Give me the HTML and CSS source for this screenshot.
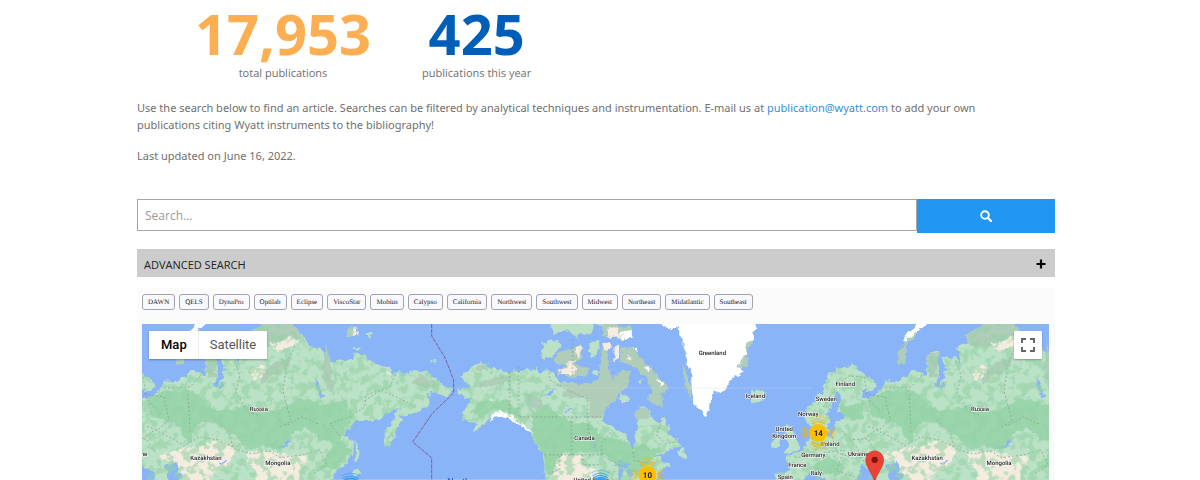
FILE: index.html
```html
<!DOCTYPE html>
<html lang="en">
<head>
<meta charset="utf-8">
<title>Bibliography</title>
<link rel="stylesheet" href="styles.css">
</head>
<body>
<main class="page">
  <section class="stats">
    <div class="stat stat-total"><strong>17,953</strong><span>total publications</span></div>
    <div class="stat stat-year"><strong>425</strong><span>publications this year</span></div>
  </section>
  <p class="intro">Use the search below to find an article. Searches can be filtered by analytical techniques and instrumentation. E-mail us at <a href="mailto:publication@wyatt.com">publication@wyatt.com</a> to add your own publications citing Wyatt instruments to the bibliography!</p>
  <p class="intro">Last updated on June 16, 2022.</p>

  <form class="search">
    <input type="text" placeholder="Search..." aria-label="Search">
    <button type="button" aria-label="Search">
      <svg width="12" height="12" viewBox="0 0 12 12"><circle cx="5" cy="5" r="3.8" fill="none" stroke="#fff" stroke-width="1.9"/><path d="M7.8 7.8L11 11" stroke="#fff" stroke-width="2.2" stroke-linecap="round"/></svg>
    </button>
  </form>

  <button type="button" class="advanced"><span>ADVANCED SEARCH</span>
    <svg width="10" height="10" viewBox="0 0 10 10"><path d="M5 .5v9M.5 5h9" stroke="#000" stroke-width="2.2"/></svg>
  </button>

  <section class="results">
    <div class="tags">
      <button type="button">DAWN</button><button type="button">QELS</button><button type="button">DynaPro</button><button type="button">Optilab</button><button type="button">Eclipse</button><button type="button">ViscoStar</button><button type="button">Mobius</button><button type="button">Calypso</button><button type="button">California</button><button type="button">Northwest</button><button type="button">Southwest</button><button type="button">Midwest</button><button type="button">Northeast</button><button type="button">Midatlantic</button><button type="button">Southeast</button>
    </div>
    <div class="map">
      <svg class="world" viewBox="142 324 908 156" role="img" aria-label="World map">
        <defs>
          <filter id="terrain" filterUnits="userSpaceOnUse" x="30" y="310" width="1040" height="185" color-interpolation-filters="sRGB">
            <feTurbulence type="fractalNoise" baseFrequency="0.16" numOctaves="3" seed="4" result="rough"/>
            <feDisplacementMap in="SourceGraphic" in2="rough" scale="7" xChannelSelector="R" yChannelSelector="G"/>
          </filter>
          <filter id="woods" filterUnits="userSpaceOnUse" x="30" y="310" width="1040" height="185" color-interpolation-filters="sRGB">
            <feTurbulence type="fractalNoise" baseFrequency="0.12" numOctaves="5" seed="9"/>
            <feColorMatrix values="0 0 0 0 .58  0 0 0 0 .82  0 0 0 0 .65  9 0 0 0 -4.4" result="spots"/>
            <feComposite in="spots" in2="SourceAlpha" operator="in"/>
          </filter>
          <path id="asia" d="M53 490L55 473L71 472L66 465L63 457L81 452L88 440L90 428L96 434L111 437L115 423L125 417L116 410L121 395L115 392L111 403L106 413L108 433L98 430L82 421L86 408L101 392L108 373L120 367L130 365L138 370L151 380L153 387L145 390L138 390L141 397L152 398L160 388L168 380L171 383L188 375L193 370L201 372L206 377L205 357L210 352L217 352L218 373L216 387L221 382L225 370L221 357L230 358L235 357L241 366L238 353L235 348L245 343L245 335L261 324L291 322L305 340L310 345L320 348L330 362L343 360L352 360L355 353L363 355L373 363L390 367L392 375L398 372L410 375L415 369L427 372L437 378L442 385L452 388L450 395L445 397L435 392L427 395L430 402L427 407L413 415L402 417L398 427L390 447L385 447L385 432L393 420L400 408L392 410L380 420L357 420L343 435L353 440L353 453L347 463L337 472L330 482L330 490Z"/>
          <g id="eurasia">
            <g filter="url(#terrain)">
              <use href="#asia" fill="#bbe2c6"/>
              <path fill="#bbe2c6" d="M50 442L57 438L59 446L50 448ZM64 425L70 426L74 437L79 445L76 452L63 454L68 446L63 437ZM25 392L32 389L44 392L42 400L33 403L26 399ZM140 375L150 379L156 387L147 391L139 388ZM356 440L359 446L360 460L356 463ZM355 469L362 472L356 477L354 473ZM430 361L438 360L434 364ZM354 346L359 347L358 350L353 349ZM365 333L374 335L370 338Z"/>
              <path fill="#b0cdb9" d="M175 362L181 348L188 335L200 324L205 324L195 335L186 344L184 364ZM245 343L245 335L261 324L291 322L302 338L292 345L280 342L266 347L250 345ZM346 329L353 326L356 336L348 337ZM205 357L210 352L217 354L216 376L208 380ZM260 376L275 362L293 356L290 366L272 376L262 385ZM327 344L332 372L335 391L328 393L322 370ZM412 382L420 373L430 378L440 387L425 388Z"/>
              <path fill="#fff" d="M181 343L186 333L200 322L208 322L196 333L188 337Z"/>
              <path fill="#94d2a5" opacity=".8" d="M146 400L165 390L195 391L205 403L222 411L249 405L272 412L300 398L328 405L350 420L340 440L320 440L306 428L290 436L278 450L263 446L250 450L235 436L215 422L196 425L189 445L178 425L150 416ZM330 405L346 400L353 420L338 440L352 450L335 470L320 468L332 448ZM388 435L394 429L389 443ZM118 407L132 405L142 401L142 420L122 418ZM90 465L108 458L125 467L118 475L95 474Z"/>
              <path fill="#f3ecdf" d="M158 457L186 447L199 448L213 442L229 443L236 450L234 457L226 467L216 473L203 490L170 490L176 463ZM249 453L269 452L279 455L309 457L303 467L293 490L260 490L255 471L246 463ZM251 368L265 365L266 372L255 381L252 377ZM270 342L276 344L283 340L292 336L300 341L290 347L282 349L278 353ZM355 327L358 335L353 336ZM389 372L393 376L388 375Z"/>
              <path fill="#8ab4f8" d="M165 466L176 462L178 470L183 476L176 484L167 478ZM140 466L148 469L156 476L154 484L136 482ZM279 447L285 444L291 436L290 442L284 448L279 449ZM219 462L229 461L224 464ZM75 490L82 478L91 472L99 475L111 490ZM216 375L218 386L228 381L221 389L213 386ZM316 376L321 391L325 397L321 397L315 386Z"/>
            </g>
            <path fill="none" stroke="#82968b" stroke-width=".7" stroke-dasharray="2 2" d="M144 394L164 397L169 420L158 430L145 426M164 388L190 387L202 374M235 361L240 376L236 392L247 411L260 416M295 346L287 364L283 391L291 421L280 427M318 424L302 417L286 426L277 417M142 439L155 430L171 438L184 446L200 437L218 440L238 450L251 454L270 451L280 458L303 455L320 450L327 465L314 474M188 390L190 432M215 420L229 432L233 447M340 436L330 424L350 417L365 407L366 395L390 387L397 372M365 401L381 390L407 402L417 407M102 407L115 387L127 376L143 377L147 399L157 410M90 438L95 450L86 458L73 457M111 437L115 452L133 459L150 454M103 453L123 450L115 471L133 477M155 452L146 439L125 440M143 462L135 447L121 431"/>
          </g>
          <path id="namerica" d="M460 377L467 373L470 368L480 362L493 368L510 372L537 368L540 372L550 370L560 382L570 383L592 383L600 378L602 357L607 357L608 370L613 380L620 377L623 370L630 370L628 387L620 390L617 398L605 410L603 420L613 428L628 435L630 445L633 448L636 443L635 435L639 428L637 408L645 407L652 410L653 418L658 423L663 416L668 425L670 435L678 440L681 446L670 450L662 453L653 458L663 457L662 463L672 465L660 470L653 490L545 490L545 457L535 443L530 433L520 424L510 418L497 412L490 417L485 423L477 430L460 440L473 432L478 423L463 420L462 413L467 405L472 400L458 393L458 390L470 388L468 383Z"/>
          <path id="temperate" d="M458 377L480 362L510 372L530 370L548 384L560 400L585 405L600 424L628 435L638 425L668 425L681 446L660 470L653 490L545 490L545 457L535 443L520 424L497 412L485 423L463 420Z"/>
          <clipPath id="temperate-land"><use href="#temperate"/></clipPath>
          <g id="rings" fill="none" stroke-width="1.6">
            <path opacity=".75" d="M-7 -9A11.4 11.4 0 0 1 7 -9M11 -4A11.7 11.7 0 0 1 11 4M7 9A11.4 11.4 0 0 1 -7 9M-11 4A11.7 11.7 0 0 1 -11 -4"/>
            <path opacity=".5" d="M-8 -11A13.6 13.6 0 0 1 8 -11M13 -5A14 14 0 0 1 13 5M8 11A13.6 13.6 0 0 1 -8 11M-13 5A14 14 0 0 1 -13 -5"/>
            <path opacity=".3" d="M-9 -14A16.6 16.6 0 0 1 9 -14M15 -6A16 16 0 0 1 15 6M9 14A16.6 16.6 0 0 1 -9 14M-15 6A16 16 0 0 1 -15 -6"/>
          </g>
        </defs>
        <rect x="142" y="324" width="908" height="156" fill="#8ab4f8"/>
        <use href="#eurasia"/>
        <use href="#eurasia" x="722"/>
        <g filter="url(#terrain)">
          <use href="#namerica" fill="#bbe2c6"/>
          <path fill="#bbe2c6" d="M677 455L682 447L688 456L685 460ZM543 342L557 340L562 345L553 357L542 358ZM549 322L567 322L583 326L582 334L577 338L570 330L554 334ZM590 343L600 342L598 356L591 359ZM594 370L600 372L597 376L593 374ZM620 391L631 400L628 402L620 400ZM639 380L643 379L642 385ZM578 323L595 323L592 334L583 335ZM597 323L612 323L605 330Z"/>
          <path fill="#b0cdb9" d="M557 353L573 348L580 345L583 357L575 363L590 368L588 375L570 377L558 372L567 365L555 362ZM622 348L633 347L643 360L653 370L668 387L667 392L661 393L664 408L648 400L653 392L648 380L637 368L621 363ZM601 346L609 343L608 358L601 357ZM602 323L619 323L611 336L602 337ZM608 324L632 327L630 338L611 338ZM553 384L575 383L592 383L600 378L602 357L607 357L613 380L623 370L630 370L628 387L620 390L617 398L605 410L602 418L591 418L590 400L575 397L561 397L568 388ZM525 391L541 400L545 408L538 412L527 402ZM478 382L500 377L513 374L508 382L492 386L479 388ZM637 408L650 409L651 417L637 421ZM480 364L490 371L475 370Z"/>
          <path fill="#f3ecdf" d="M614 346L621 344L620 359L614 361ZM578 345L582 351L579 359L577 354ZM568 362L575 361L576 374L560 374L561 369L568 368ZM609 329L618 328L621 337L610 338ZM604 343L611 342L609 351L604 350ZM627 355L632 357L630 361ZM551 460L570 455L583 455L585 467L600 470L600 490L550 490ZM485 404L493 399L490 408ZM622 401L626 402L623 404ZM620 333L632 334L629 338L622 339Z"/>
          <path fill="#fff" d="M621 332L632 330L633 337L624 338ZM633 347L639 349L637 351ZM644 366L650 368L649 372ZM656 379L663 383L661 387ZM491 415L499 410L511 413L519 419L528 428L533 433L523 427L512 420L499 416L491 420ZM541 446L551 452L547 455Z"/>
          <path fill="#94d2a5" opacity=".85" d="M532 414L548 405L560 416L575 424L590 422L603 438L628 441L632 450L643 445L660 450L655 458L640 475L622 472L615 462L605 455L590 452L570 452L558 458L553 475L546 474L546 457L533 438ZM471 412L485 400L498 402L508 400L517 410L525 420L512 415L493 408L483 419Z"/>
          <path fill="#b0cdb9" d="M682 361L688 376L692 386L690 399L686 385ZM683 342L687 348L685 358ZM738 368L741 355L749 358L748 366ZM743 344L755 329L753 342L746 354Z"/>
          <path fill="#fff" d="M655 320L668 328L678 328L684 342L686 353L689 367L692 375L692 387L694 403L703 413L707 417L709 407L715 394L725 389L732 379L747 371L738 367L742 360L747 352L746 345L754 337L757 320Z"/>
          <path fill="#8ab4f8" d="M545 395L556 388L551 397ZM563 412L575 407L565 414ZM567 405L571 407L568 408ZM613 466L622 461L631 466L622 468ZM619 469L623 470L622 482L619 480ZM627 468L634 470L631 479ZM594 442L599 449L596 450Z"/>
        </g>
        <g opacity=".6">
          <use href="#asia" filter="url(#woods)"/>
          <g transform="translate(722 0)"><use href="#asia" filter="url(#woods)"/></g>
          <g clip-path="url(#temperate-land)"><use href="#namerica" filter="url(#woods)"/></g>
        </g>
        <g fill="none" stroke="#82968b" stroke-width=".7" stroke-dasharray="2 2">
          <path d="M510 372V416L522 424M519 367V416M520 417H603M550 372V380L570 391L588 399V417L590 440M573 339V375M572 417V455M545 455H601L620 465M602 455V443L613 430M583 455V465H600M560 456V470L545 475M633 448L635 461L650 464M664 416L657 435L666 444L677 442"/>
        </g>
        <path d="M457 388H813" stroke="#cfd8e4" stroke-width=".7" opacity=".5"/>
        <path d="M432 324V336L445 357L454 380V393L433 413L413 442L432 458V480" fill="none" stroke="#7a5f9a" stroke-width="1" stroke-dasharray="4 1"/>
        <g class="country">
          <text x="259" y="411">Russia</text><text x="206" y="460">Kazakhstan</text><text x="278" y="465">Mongolia</text>
          <text x="585" y="440">Canada</text><text x="713" y="355">Greenland</text><text x="756" y="398">Iceland</text>
          <text x="846" y="386">Finland</text><text x="827" y="401">Sweden</text><text x="809" y="416">Norway</text>
          <text x="785" y="431">United</text><text x="785" y="438">Kingdom</text><text x="831" y="446">Poland</text>
          <text x="814" y="457">Germany</text><text x="859" y="456">Ukraine</text><text x="137" y="456">Ukraine</text><text x="798" y="467">France</text>
          <text x="817" y="475">Italy</text><text x="786" y="479">Spain</text><text x="981" y="411">Russia</text>
          <text x="928" y="460">Kazakhstan</text><text x="1000" y="465">Mongolia</text><text x="592" y="482">United States</text>
        </g>
        <text class="ocean" x="459" y="485">North</text>
        <g transform="translate(648 475)"><use href="#rings" stroke="#f5b400"/><circle r="9" fill="#ffbf00"/><text class="count" y="3">10</text></g>
        <g transform="translate(819 433)"><use href="#rings" stroke="#f5b400"/><circle r="9" fill="#ffbf00"/><text class="count" y="3">14</text></g>
        <g transform="translate(601 487)"><use href="#rings" stroke="#1a8fe8"/><circle r="10" fill="#3d9eea"/></g>
        <g transform="translate(351 490)"><use href="#rings" stroke="#1a8fe8"/><circle r="9" fill="#3d9eea"/></g>
        <path d="M875.500 484C874.500 474 866.500 468 866.500 460A9 9 0 0 1 884.500 460C884.500 468 876.500 474 875.500 484Z" fill="#ea4335" stroke="#c5352a" stroke-width=".6"/>
        <circle cx="875.500" cy="460" r="3.200" fill="#811411"/>
      </svg>
      <div class="map-type"><button type="button" class="active">Map</button><button type="button">Satellite</button></div>
      <button type="button" class="fullscreen" aria-label="Toggle fullscreen view">
        <svg width="14" height="14" viewBox="0 0 14 14"><path d="M1 5V1H5M9 1H13V5M13 9V13H9M5 13H1V9" fill="none" stroke="#666" stroke-width="2"/></svg>
      </button>
    </div>
  </section>
</main>
</body>
</html>
```
FILE: styles.css
```css
* { box-sizing: border-box; }
body { margin: 0; background: #fff; color: #6f6f6f; font: 11px/17px "Open Sans", sans-serif; }
button, input { font: inherit; margin: 0; border-radius: 0; }
.page { padding: 0 145px 0 137px; }
.stats { display: flex; gap: 51px; padding: 5px 0 0 58px; }
.stat { display: flex; flex-direction: column; align-items: center; gap: 2px; text-rendering: geometricPrecision; }
.stat strong { font-size: 56px; line-height: 58px; font-weight: 700; }
.stat-total strong { color: #fbae52; }
.stat-year strong { color: #005eb8; }
.intro { margin: 0 30px 14px 0; font-family: "Noto Sans", "Open Sans", sans-serif; }
.stats + .intro { margin-top: 17px; }
.intro a { color: #3490dc; text-decoration: none; }
.search { display: flex; align-items: flex-start; margin-top: 35px; }
.search input { flex: 1; min-width: 0; height: 32px; padding: 0 7px; border: 1px solid #a6a6a6; background: #fff; color: #555; font-size: 12px; }
.search input::placeholder { color: #999; opacity: 1; }
.search button { width: 15%; height: 34px; border: 0; background: #2196f3; display: flex; align-items: center; justify-content: center; }
.advanced { display: flex; justify-content: space-between; align-items: center; width: 100%; height: 28px; margin-top: 16px; padding: 2px 9px 0 7px; border: 0; background: #ccc; color: #222; }
.results { margin-top: 11px; padding: 6px 6px 0 5px; background: #fbfbfb; }
.tags { display: flex; flex-wrap: wrap; gap: 4px; }
.tags button { height: 16px; padding: 0 5px; border: 1px solid #a3a3ab; border-radius: 3px; background: #f8f8ff; color: #222; font: 7px/14px "Liberation Serif", serif; text-rendering: geometricPrecision; }
.map { position: relative; margin-top: 14px; overflow: hidden; }
.world { display: block; width: 100%; }
.country { font: 500 6px Roboto, sans-serif; text-anchor: middle; fill: #222; stroke: #fff; stroke-width: 1px; paint-order: stroke; text-rendering: geometricPrecision; }
.ocean { font: 500 9px Roboto, sans-serif; text-anchor: middle; fill: #3367b8; }
.count { font: 700 8px Roboto, sans-serif; text-anchor: middle; fill: #222; text-rendering: geometricPrecision; }
.map-type { position: absolute; left: 7px; top: 7px; display: flex; background: #fff; box-shadow: 0 1px 2px rgba(0,0,0,.3); }
.map-type button { height: 28px; padding: 0 11px; border: 0; background: #fff; color: #565656; font: 13px/28px Roboto, sans-serif; }
.map-type .active { padding: 0 11px 0 12px; color: #000; font-weight: 500; border-right: 1px solid #eee; }
.fullscreen { position: absolute; right: 7px; top: 7px; width: 28px; height: 28px; padding: 0; border: 0; border-radius: 1px; background: #fff; box-shadow: 0 1px 2px rgba(0,0,0,.3); display: flex; align-items: center; justify-content: center; }
```
